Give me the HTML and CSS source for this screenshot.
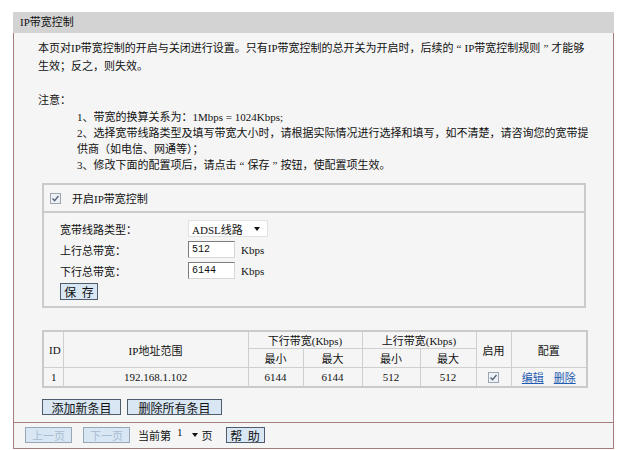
FILE: index.html
```html
<!DOCTYPE html>
<html lang="zh-CN">
<head>
<meta charset="utf-8">
<title>IP带宽控制</title>
<link rel="stylesheet" href="styles.css">
</head>
<body>
<div class="panel">
  <div class="title">IP带宽控制</div>
  <div class="main">
    <p class="intro">本页对IP带宽控制的开启与关闭进行设置。只有IP带宽控制的总开关为开启时，后续的<span class="q">“</span>IP带宽控制规则<span class="q">”</span>才能够<br>生效；反之，则失效。</p>
    <p class="note-title">注意：</p>
    <div class="notes">
      <p>1、带宽的换算关系为：1Mbps = 1024Kbps;</p>
      <p>2、选择宽带线路类型及填写带宽大小时，请根据实际情况进行选择和填写，如不清楚，请咨询您的宽带提<br>供商（如电信、网通等）；</p>
      <p>3、修改下面的配置项后，请点击<span class="q">“</span>保存<span class="q">”</span>按钮，使配置项生效。</p>
    </div>
    <div class="box">
      <div class="box-head">
        <span class="cb"><svg viewBox="0 0 11 11" width="11" height="11"><rect x="0.5" y="0.5" width="10" height="10" fill="#eef1f5" stroke="#9ca6b3"/><path d="M2.5 5.5 L4.6 7.8 L8.5 3" fill="none" stroke="#55667c" stroke-width="1.4"/></svg></span>
        <span class="head-text">开启IP带宽控制</span>
      </div>
      <div class="box-body">
        <div class="form-grid">
          <span class="label">宽带线路类型：</span>
          <span class="field"><span class="select">ADSL线路<span class="arrow"></span></span></span>
          <span class="label">上行总带宽：</span>
          <span class="field"><span class="input">512</span><span class="unit">Kbps</span></span>
          <span class="label">下行总带宽：</span>
          <span class="field"><span class="input">6144</span><span class="unit">Kbps</span></span>
        </div>
        <button class="btn btn-save">保&nbsp;存</button>
      </div>
    </div>
    <table class="rules">
      <colgroup>
        <col class="c-id"><col class="c-ip"><col class="c-n1"><col class="c-n2"><col class="c-n3"><col class="c-n4"><col class="c-en"><col class="c-cfg">
      </colgroup>
      <tr class="h1">
        <th rowspan="2" class="id">ID</th>
        <th rowspan="2">IP地址范围</th>
        <th colspan="2">下行带宽(Kbps)</th>
        <th colspan="2">上行带宽(Kbps)</th>
        <th rowspan="2">启用</th>
        <th rowspan="2">配置</th>
      </tr>
      <tr class="h2">
        <th>最小</th><th>最大</th><th>最小</th><th>最大</th>
      </tr>
      <tr class="data">
        <td class="id">1</td>
        <td>192.168.1.102</td>
        <td>6144</td>
        <td>6144</td>
        <td>512</td>
        <td>512</td>
        <td><span class="cb"><svg viewBox="0 0 11 11" width="11" height="11"><rect x="0.5" y="0.5" width="10" height="10" fill="#eef1f5" stroke="#9ca6b3"/><path d="M2.5 5.5 L4.6 7.8 L8.5 3" fill="none" stroke="#55667c" stroke-width="1.4"/></svg></span></td>
        <td><a href="#" class="link">编辑</a><a href="#" class="link">删除</a></td>
      </tr>
    </table>
    <div class="actions">
      <button class="btn btn-add">添加新条目</button>
      <button class="btn btn-del">删除所有条目</button>
    </div>
  </div>
  <div class="footer">
    <button class="btn btn-page" disabled>上一页</button>
    <button class="btn btn-page" disabled>下一页</button>
    <span class="cur">当前第</span>
    <span class="pg-select"><span class="pg-num">1</span><span class="arrow"></span></span>
    <span class="pg-unit">页</span>
    <button class="btn btn-help">帮&nbsp;助</button>
  </div>
</div>
</body>
</html>
```
FILE: styles.css
```css
* { box-sizing: border-box; }
html, body { margin: 0; background: #ffffff; }
body {
  font-family: "Liberation Serif", "Noto Sans CJK SC", serif;
  font-size: 11px;
  color: #111;
}
.panel {
  width: 601px;
  margin: 12px 0 0 13px;
  border: 1px solid #a87c7a;
  border-top: none;
  background: #f5f5f5;
}
.title {
  height: 21px;
  margin: 0 -1px;
  padding-left: 7px;
  line-height: 21px;
  background: #d3d3d3;
}
.main { padding: 6px 26px 7px 24px; }
.intro { margin: 0; line-height: 18px; white-space: nowrap; }
.q { display: inline-block; width: 11px; text-align: center; }
.note-title { margin: 16px 0 0; line-height: 18px; }
.notes { padding-left: 39px; line-height: 16px; white-space: nowrap; }
.notes p { margin: 0; }

.box {
  margin: 10px 0 0 4px;
  width: 544px;
  border: 2px solid #cbcbcb;
}
.box-head {
  height: 28px;
  display: flex;
  align-items: center;
  padding-left: 6px;
  border-bottom: 2px solid #cbcbcb;
}
.cb { display: inline-flex; width: 11px; height: 11px; }
.head-text { margin-left: 11px; }
.box-body { padding: 7px 0 6px 16px; }
.form-grid {
  display: grid;
  grid-template-columns: 128px 1fr;
  grid-auto-rows: 17px;
  row-gap: 4px;
  align-items: center;
}
.field { display: flex; align-items: center; }
.select {
  width: 80px;
  height: 17px;
  background: #fff;
  border: 1px solid #e2e2e2;
  display: flex;
  align-items: center;
  padding-left: 3px;
}
.arrow {
  display: inline-block;
  width: 0; height: 0;
  border-left: 3.5px solid transparent;
  border-right: 3.5px solid transparent;
  border-top: 4px solid #111;
}
.select .arrow { margin-left: auto; margin-right: 7px; }
.input {
  width: 47px;
  height: 17px;
  background: #fff;
  border: 1px solid #d6d6d6;
  border-top-color: #7c7c7c;
  border-left-color: #7c7c7c;
  padding-left: 3px;
  line-height: 15px;
  font-family: "Liberation Mono", monospace;
  font-size: 10px;
}
.unit { margin-left: 6px; }

.btn {
  font-family: "Noto Sans CJK SC", sans-serif;
  font-size: 12px;
  color: #111;
  height: 17px;
  padding: 0;
  line-height: 15px;
  background: #d9e6f4;
  border: 1px solid #4e5c6e;
  border-radius: 0;
}
.btn-save { width: 38px; margin-top: 4px; display: block; word-spacing: 3px; }

.rules {
  margin: 22px 0 0 4px;
  width: 544px;
  table-layout: fixed;
  border-collapse: collapse;
  border: 2px solid #cacaca;
}
.rules th, .rules td {
  border: 1px solid #cfcfcf;
  padding: 0;
  font-weight: normal;
  text-align: center;
}
.c-id { width: 20px; }
.c-ip { width: 185px; }
.c-n1 { width: 55px; }
.c-n2 { width: 59px; }
.c-n3 { width: 58px; }
.c-n4 { width: 56px; }
.c-en { width: 35px; }
.c-cfg { width: 76px; }
.h1 { height: 17px; }
.h2 { height: 19px; }
.data { height: 19px; }
.rules .id { text-align: left; padding-left: 5px; }
.rules .data .id { padding-left: 7px; }
.rules .cb { vertical-align: middle; }
.link { color: #1f5bb0; text-decoration: underline; margin: 0 5px; }

.actions { margin: 11px 0 0 4px; display: flex; gap: 6px; }
.btn-add { width: 79px; height: 16px; }
.btn-del { width: 95px; height: 16px; }

.footer {
  height: 26px;
  border-top: 1px solid #a87c7a;
  display: flex;
  align-items: center;
  padding-left: 11px;
}
.btn-page {
  width: 47px;
  height: 16px;
  font-size: 11px;
  color: #a8bcd2;
  border-color: #98a7b8;
  margin-right: 11px;
}
.cur { margin-left: -3px; }
.pg-select { display: inline-flex; align-items: center; margin-left: 6px; }
.pg-num { position: relative; top: -3px; }
.pg-select .arrow { margin-left: 9px; }
.pg-unit { margin-left: 4px; }
.btn-help { width: 39px; height: 16px; margin-left: 13px; word-spacing: 3px; }
```
